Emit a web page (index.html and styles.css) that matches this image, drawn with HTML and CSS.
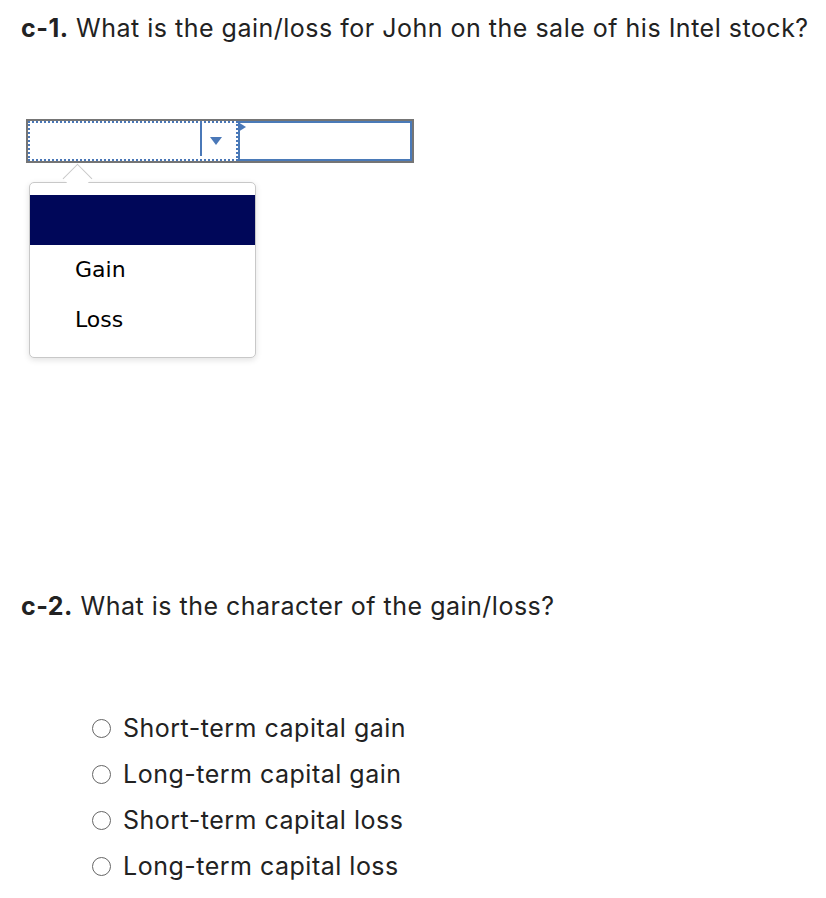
FILE: index.html
```html
<!DOCTYPE html>
<html lang="en">
<head>
    <meta charset="UTF-8">
    <meta name="viewport" content="width=device-width, initial-scale=1.0">
    <title>Question c</title>
    <link rel="stylesheet" href="styles.css">
</head>
<body>
    <div class="question">
        <p class="prompt"><b>c-1.</b> What is the gain/loss for John on the sale of his Intel stock?</p>

        <div class="answer-row">
            <div class="select-box">
                <span class="select-value"></span>
                <span class="select-divider"></span>
                <span class="select-arrow"></span>
            </div>
            <span class="input-flag"></span>
            <div class="amount-input"></div>

            <div class="dropdown">
                <div class="dropdown-item selected"></div>
                <div class="dropdown-item">Gain</div>
                <div class="dropdown-item">Loss</div>
            </div>
        </div>
    </div>

    <div class="question second">
        <p class="prompt"><b>c-2.</b> What is the character of the gain/loss?</p>

        <ul class="choices">
            <li><span class="radio"></span>Short-term capital gain</li>
            <li><span class="radio"></span>Long-term capital gain</li>
            <li><span class="radio"></span>Short-term capital loss</li>
            <li><span class="radio"></span>Long-term capital loss</li>
        </ul>
    </div>
</body>
</html>
```

FILE: styles.css
```css
body {
    margin: 0;
    padding: 0;
    font-family: Inter, "Open Sans", Arial, sans-serif;
    color: #222;
    background: #fff;
}

.question {
    padding: 0 0 0 21px;
}

.prompt {
    margin: 0;
    padding-top: 11px;
    font-size: 25px;
    letter-spacing: 0.5px;
    line-height: 34px;
}

.prompt b {
    font-weight: 700;
}

.answer-row {
    position: relative;
    display: flex;
    width: 384px;
    height: 40px;
    margin: 74px 0 0 5px;
    border: 2px solid #757575;
}

.select-box {
    position: relative;
    display: flex;
    align-items: center;
    width: 206px;
    height: 36px;
    border: 2px dotted #4a78b8;
}

.select-value {
    flex: 1;
}

.select-divider {
    width: 2px;
    height: 33px;
    margin-top: -3px;
    background: #4a78b8;
}

.select-arrow {
    width: 0;
    height: 0;
    margin: 0 14px 0 8px;
    border-left: 6px solid transparent;
    border-right: 6px solid transparent;
    border-top: 8px solid #4a78b8;
}

.input-flag {
    position: absolute;
    left: 210px;
    top: 1px;
    width: 0;
    height: 0;
    border-top: 5px solid transparent;
    border-bottom: 5px solid transparent;
    border-left: 8px solid #4a78b8;
}

.amount-input {
    flex: 1;
    height: 36px;
    border: 2px solid #4a7ab8;
}

.dropdown {
    position: absolute;
    left: 1px;
    top: 61px;
    width: 225px;
    padding: 12px 0;
    background: #fff;
    border: 1px solid #c8c8c8;
    border-radius: 5px;
    box-shadow: 0 2px 6px rgba(0, 0, 0, 0.12);
    font-family: "DejaVu Sans", Verdana, sans-serif;
    font-size: 22px;
    color: #000;
}

.dropdown::before {
    content: "";
    position: absolute;
    left: 37px;
    top: -15px;
    width: 20px;
    height: 20px;
    background: #fff;
    border-left: 1px solid #c8c8c8;
    border-top: 1px solid #c8c8c8;
    transform: rotate(45deg);
}

.dropdown-item {
    position: relative;
    height: 50px;
    line-height: 50px;
    padding-left: 45px;
}

.dropdown-item.selected {
    background: #000759;
}

.second {
    margin-top: 415px;
}

.choices {
    list-style: none;
    margin: 0;
    padding: 82px 0 0 71px;
}

.choices li {
    display: flex;
    align-items: center;
    height: 46px;
    font-size: 25px;
    letter-spacing: 0.5px;
}

.radio {
    width: 17px;
    height: 17px;
    margin-right: 12px;
    border: 1px solid #666;
    border-radius: 50%;
}
```
